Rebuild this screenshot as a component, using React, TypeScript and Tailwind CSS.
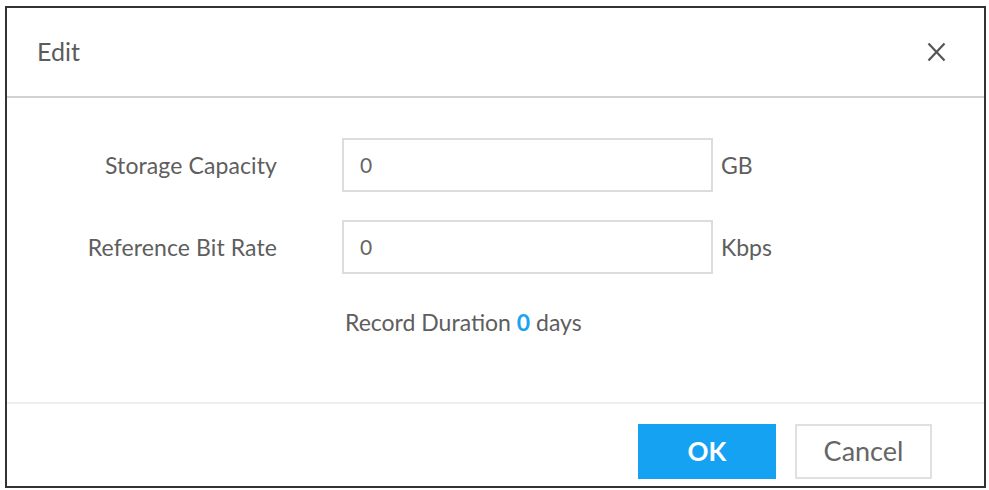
import React from 'react';

type FieldProps = {
  label: string;
  value: string;
  unit: string;
};

function Field({ label, value, unit }: FieldProps) {
  return (
    <div className="flex items-center">
      <label className="w-[270px] shrink-0 text-right text-[23px] tracking-[0.1px] text-[#5e5e5e]">{label}</label>
      <div className="ml-[65px] flex h-[54px] w-[371px] items-center border-2 border-[#dcdcdc] bg-white px-[16px] text-[21px] text-[#666]">
        {value}
      </div>
      <span className="ml-[8px] text-[23px] text-[#5e5e5e]">{unit}</span>
    </div>
  );
}

export default function App() {
  return (
    <div className="h-[490px] w-[989px] bg-white pl-[5px] pt-[6px] font-['Lato','Liberation_Sans',sans-serif]">
      <div className="flex h-[482px] w-[981px] flex-col border-2 border-[#333]">
        {/* header */}
        <div className="flex h-[90px] shrink-0 items-center justify-between border-b-2 border-[#d2d2d2] pl-[30px] pr-[38px]">
          <span className="text-[25px] text-[#5c5c5c]">Edit</span>
          <svg width="19" height="20" viewBox="0 0 19 20" className="text-[#555]">
            <path d="M1.5 1.5 L17.5 18.5 M17.5 1.5 L1.5 18.5" stroke="currentColor" strokeWidth="2.2" />
          </svg>
        </div>

        {/* form body */}
        <div className="flex flex-1 flex-col gap-[28px] pt-[40px]">
          <Field label="Storage Capacity" value="0" unit="GB" />
          <Field label="Reference Bit Rate" value="0" unit="Kbps" />
          <div className="ml-[338px] mt-[3px] text-[23px] text-[#5e5e5e]">
            Record Duration <span className="font-bold text-[#1aa3ee]">0</span> days
          </div>
        </div>

        {/* footer */}
        <div className="flex h-[84px] shrink-0 items-start justify-end gap-[19px] border-t-2 border-[#efefef] pr-[52px] pt-[20px]">
          <button className="h-[55px] w-[138px] bg-[#16a2f2] text-[26px] font-bold text-white">OK</button>
          <button className="h-[55px] w-[137px] border-2 border-[#e0e0e0] bg-white text-[27px] text-[#666]">Cancel</button>
        </div>
      </div>
    </div>
  );
}
